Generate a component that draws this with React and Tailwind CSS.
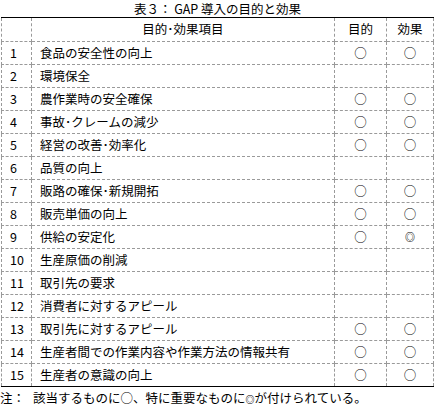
import React from 'react';

const rows = [
  ['1', '食品の安全性の向上', '○', '○'],
  ['2', '環境保全', '', ''],
  ['3', '農作業時の安全確保', '○', '○'],
  ['4', '事故･クレームの減少', '○', '○'],
  ['5', '経営の改善･効率化', '○', '○'],
  ['6', '品質の向上', '', ''],
  ['7', '販路の確保･新規開拓', '○', '○'],
  ['8', '販売単価の向上', '○', '○'],
  ['9', '供給の安定化', '○', '◎'],
  ['10', '生産原価の削減', '', ''],
  ['11', '取引先の要求', '', ''],
  ['12', '消費者に対するアピール', '', ''],
  ['13', '取引先に対するアピール', '○', '○'],
  ['14', '生産者間での作業内容や作業方法の情報共有', '○', '○'],
  ['15', '生産者の意識の向上', '○', '○'],
];

const cell = 'border border-dashed border-[#9a9a9a] p-0';

export default function App() {
  return (
    <div
      className="w-[435px] h-[406px] bg-white text-[12.5px] leading-none text-black"
      style={{ fontFamily: '"Noto Sans CJK JP", "Noto Sans", sans-serif' }}
    >
      <div className="h-[17px] leading-[18px] text-center whitespace-nowrap">表３： GAP 導入の目的と効果</div>

      <table className="ml-px w-[432px] border-collapse table-fixed">
        <colgroup>
          <col className="w-[30px]" />
          <col className="w-[303px]" />
          <col className="w-[52px]" />
          <col className="w-[47px]" />
        </colgroup>
        <thead>
          <tr className="h-[24px] border-t border-t-black">
            <th className={`${cell} border-t-solid border-t-black font-normal`}></th>
            <th className={`${cell} border-t-solid border-t-black font-normal text-center`}>目的･効果項目</th>
            <th className={`${cell} border-t-solid border-t-black font-normal text-center`}>目的</th>
            <th className={`${cell} border-t-solid border-t-black font-normal text-center`}>効果</th>
          </tr>
        </thead>
        <tbody>
          {rows.map(([no, label, a, b], i) => {
            const last = i === rows.length - 1;
            const bottom = last ? 'border-b-black' : '';
            return (
              <tr key={no} className={`h-[23px] ${last ? 'border-b border-b-black' : ''}`}>
                <td className={`${cell} ${bottom} pl-2`}>{no}</td>
                <td className={`${cell} ${bottom} pl-2 whitespace-nowrap`}>{label}</td>
                <td className={`${cell} ${bottom} text-center`}>{a}</td>
                <td className={`${cell} ${bottom} text-center ${b === '◎' ? 'text-[10px] font-bold' : ''}`}>{b}</td>
              </tr>
            );
          })}
        </tbody>
      </table>

      <div className="mt-[2px] leading-[17px] whitespace-nowrap">
        注：<span className="ml-2">該当するものに○、特に重要なものに</span>
        <span className="text-[9px] font-bold">◎</span>が付けられている。
      </div>
    </div>
  );
}
